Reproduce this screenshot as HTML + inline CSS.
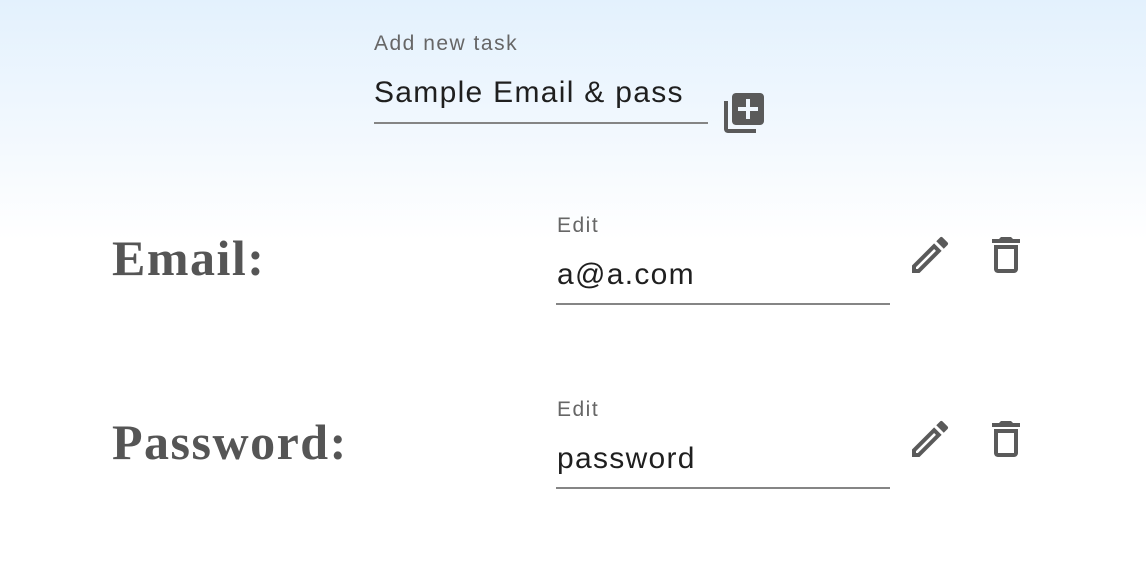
<!DOCTYPE html>
<html><head><style>
html,body{margin:0;padding:0}
body{width:1146px;height:572px;position:relative;overflow:hidden;font-family:"Liberation Sans",sans-serif;background:linear-gradient(#e3f1fd 0px,#f4f9fe 150px,#fff 240px,#fff)}
.a{position:absolute;white-space:nowrap}
.lab{font-size:21px;color:#666;letter-spacing:1.5px}
.val{font-size:30px;color:#1f1f1f;letter-spacing:1.3px}
.line{position:absolute;height:2px;background:#858585}
.big{font-family:"Liberation Serif",serif;font-size:50px;color:#555;font-weight:bold;letter-spacing:1.5px}
svg{position:absolute;fill:#5a5a5a}
</style></head><body>
<div class="a lab" style="left:374px;top:32px">Add new task</div>
<div class="a val" style="left:374px;top:76px">Sample Email &amp; pass</div>
<div class="line" style="left:374px;top:122px;width:334px"></div>
<svg style="left:720px;top:89px" width="48" height="48" viewBox="0 0 24 24"><path d="M4 6H2v14c0 1.1.9 2 2 2h14v-2H4V6zm16-4H8c-1.1 0-2 .9-2 2v12c0 1.1.9 2 2 2h12c1.1 0 2-.9 2-2V4c0-1.1-.9-2-2-2zm-1 9h-4v4h-2v-4H9V9h4V5h2v4h4v2z"/></svg>

<div class="a big" style="left:112px;top:229px">Email:</div>
<div class="a lab" style="left:557px;top:214px">Edit</div>
<div class="a val" style="left:557px;top:258px">a@a.com</div>
<div class="line" style="left:556px;top:303px;width:334px"></div>
<svg style="left:906px;top:231px" width="48" height="48" viewBox="0 0 24 24"><path d="M3 17.25V21h3.75L17.81 9.94l-3.75-3.75L3 17.25zM5.92 19H5v-.92l9.06-9.06.92.92L5.92 19zM20.71 5.63l-2.34-2.34a1 1 0 0 0-1.41 0l-1.83 1.83 3.75 3.75 1.83-1.83a1 1 0 0 0 0-1.41z"/></svg>
<svg style="left:982px;top:231px" width="48" height="48" viewBox="0 0 24 24"><path d="M6 19c0 1.1.9 2 2 2h8c1.1 0 2-.9 2-2V7H6v12zM8 9h8v10H8V9zm7.5-5l-1-1h-5l-1 1H5v2h14V4z"/></svg>

<div class="a big" style="left:112px;top:413px">Password:</div>
<div class="a lab" style="left:557px;top:398px">Edit</div>
<div class="a val" style="left:557px;top:442px">password</div>
<div class="line" style="left:556px;top:487px;width:334px"></div>
<svg style="left:906px;top:415px" width="48" height="48" viewBox="0 0 24 24"><path d="M3 17.25V21h3.75L17.81 9.94l-3.75-3.75L3 17.25zM5.92 19H5v-.92l9.06-9.06.92.92L5.92 19zM20.71 5.63l-2.34-2.34a1 1 0 0 0-1.41 0l-1.83 1.83 3.75 3.75 1.83-1.83a1 1 0 0 0 0-1.41z"/></svg>
<svg style="left:982px;top:415px" width="48" height="48" viewBox="0 0 24 24"><path d="M6 19c0 1.1.9 2 2 2h8c1.1 0 2-.9 2-2V7H6v12zM8 9h8v10H8V9zm7.5-5l-1-1h-5l-1 1H5v2h14V4z"/></svg>
</body></html>
